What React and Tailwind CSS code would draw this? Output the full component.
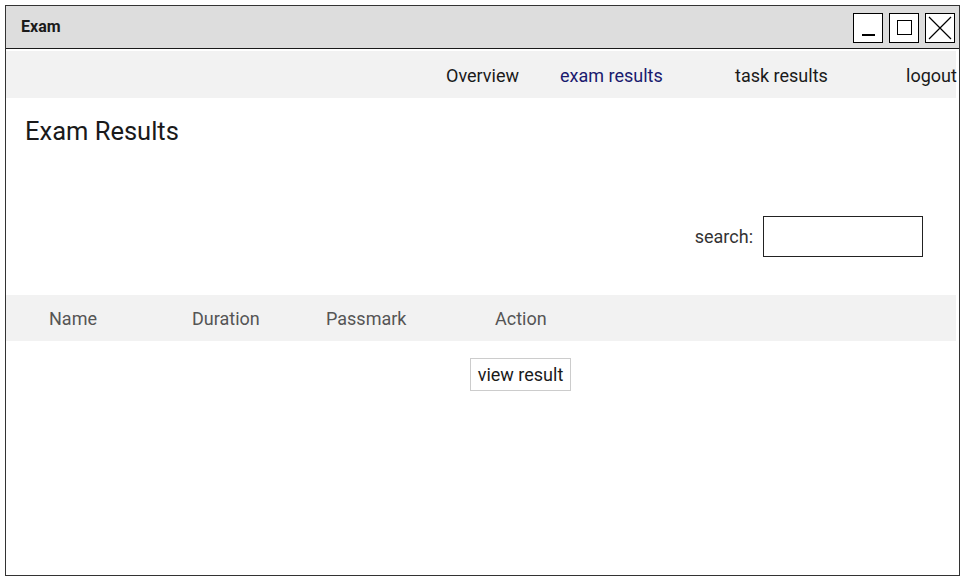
export default function App() {
  const navItems = [
    { label: 'Overview', w: 'w-[114px]', color: 'text-[#1a1a1a]' },
    { label: 'exam results', w: 'w-[175px]', color: 'text-[#1a1a6e]' },
    { label: 'task results', w: 'w-[171px]', color: 'text-[#1a1a1a]' },
    { label: 'logout', w: 'w-[52px]', color: 'text-[#1a1a1a]' },
  ]

  return (
    <div className="w-[966px] h-[582px] bg-white pl-[5px] pt-[5px] font-['Roboto',sans-serif]">
      <div className="w-[955px] h-[571px] border border-[#333] flex flex-col overflow-hidden">
        {/* title bar */}
        <div className="h-[43px] bg-[#dddddd] border-b border-[#1a1a1a] flex items-center pl-[15px] pr-[4px]">
          <span className="text-[16px] font-bold text-[#1a1a1a]">Exam</span>
          <div className="ml-auto flex gap-[6px] pt-[1px]">
            <div className="w-[30px] h-[30px] border border-black bg-white flex items-end justify-center pb-[6px]">
              <div className="w-[13px] h-[1.5px] bg-black" />
            </div>
            <div className="w-[30px] h-[30px] border border-black bg-white flex items-center justify-center">
              <div className="w-[15px] h-[15px] border border-black" />
            </div>
            <div className="w-[30px] h-[30px] border border-black bg-white flex items-center justify-center">
              <svg width="24" height="24" viewBox="0 0 24 24">
                <path d="M1 1L23 23M23 1L1 23" stroke="black" strokeWidth="1.2" fill="none" />
              </svg>
            </div>
          </div>
        </div>

        {/* nav */}
        <div className="mt-[2px] mr-[3px] h-[47px] bg-[#f2f2f2] flex items-center pl-[440px] pt-[1px]">
          {navItems.map(item => (
            <span key={item.label} className={`${item.w} shrink-0 text-[18px] whitespace-nowrap ${item.color}`}>
              {item.label}
            </span>
          ))}
        </div>

        {/* heading */}
        <div className="pl-[19px] pt-[17px] h-[63px]">
          <h1 className="text-[25.5px] text-[#1a1a1a] leading-[32px]">Exam Results</h1>
        </div>

        {/* search */}
        <div className="mt-[55px] flex items-center justify-end pr-[36px]">
          <span className="text-[18px] text-[#333] mr-[10px]">search:</span>
          <div className="w-[160px] h-[41px] border-[1.5px] border-[#222]" />
        </div>

        {/* table header */}
        <div className="mt-[38px] mr-[3px] h-[46px] bg-[#f2f2f2] flex items-center text-[18px] text-[#555]">
          <span className="ml-[43px] w-[143px]">Name</span>
          <span className="w-[134px]">Duration</span>
          <span className="w-[169px]">Passmark</span>
          <span>Action</span>
        </div>

        {/* row */}
        <div className="mt-[17px] pl-[464px]">
          <button className="w-[101px] h-[33px] border border-[#cccccc] text-[18px] text-[#1a1a1a] bg-white">
            view result
          </button>
        </div>
      </div>
    </div>
  )
}
